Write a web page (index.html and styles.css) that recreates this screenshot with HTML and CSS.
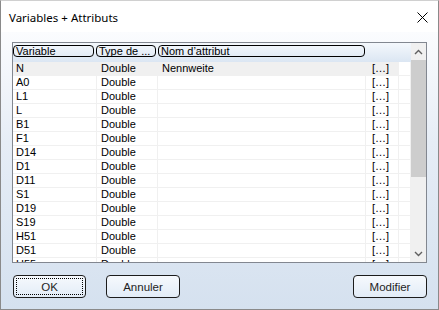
FILE: index.html
```html
<html>
	<head>
		<title>Variables + Attributs</title>
		<link rel="stylesheet" href="styles.css">
	</head>
	<body>
		<div class="dialog">
			<div class="titlebar">
				<span class="title">Variables + Attributs</span>
				<svg class="close" width="11" height="11" viewBox="0 0 11 11">
					<path d="M0.5 0.5 L10.5 10.5 M10.5 0.5 L0.5 10.5" stroke="#000" stroke-width="1" fill="none"/>
				</svg>
			</div>
			<div class="client">
				<div class="listbox">
					<div class="grid">
						<div class="header">
							<div class="hcell w1">Variable</div>
							<div class="hcell w2">Type de ...</div>
							<div class="hcell w3">Nom d’attribut</div>
						</div>
						<div class="rows" id="rows"></div>
					</div>
					<div class="scrollbar">
						<div class="sbtn">
							<svg width="9" height="6" viewBox="0 0 9 6"><path d="M1 5 L4.5 1.5 L8 5" stroke="#606060" stroke-width="1.4" fill="none"/></svg>
						</div>
						<div class="thumb"></div>
						<div class="track"></div>
						<div class="sbtn">
							<svg width="9" height="6" viewBox="0 0 9 6"><path d="M1 1 L4.5 4.5 L8 1" stroke="#606060" stroke-width="1.4" fill="none"/></svg>
						</div>
					</div>
				</div>
				<div class="buttons">
					<div class="btn focus"><span>OK</span></div>
					<div class="btn">Annuler</div>
					<div class="spacer"></div>
					<div class="btn">Modifier</div>
				</div>
			</div>
		</div>

		<script>
			var variables=["N","A0","L1","L","B1","F1","D14","D1","D11","S1","D19","S19","H51","D51","H55"];
			init();
			function init(){
				var rows=document.getElementById("rows");
				for(var x=0; x<variables.length; x++){
					var row=document.createElement('div');
					row.className="row";
					if(x==0){ row.className+=" first"; }
					row.innerHTML='<div class="cell">'+variables[x]+'</div>'+
						'<div class="cell">Double</div>'+
						'<div class="cell">'+(x==0 ? 'Nennweite' : '')+'</div>'+
						'<div class="cell dots">[…]</div>'+
						'<div class="cell blank"></div>';
					rows.appendChild(row);
				}
			}
		</script>
	</body>
</html>
```

FILE: styles.css
```css
body{
	margin:0px;
	background-color:white;
}
.dialog{
	width:439px;
	height:310px;
	box-sizing:border-box;
	border:1px solid #8a8a8a;
	border-top-color:#d0d0d0;
	display:flex;
	flex-direction:column;
	font-family:"Liberation Sans", Arial, sans-serif;
}
.titlebar{
	height:31px;
	background:white;
	display:flex;
	align-items:center;
	padding-left:8px;
	padding-right:10px;
	flex-shrink:0;
}
.title{
	font-family:"Noto Sans", sans-serif;
	font-size:11.5px;
	color:black;
	flex:1;
	margin-top:1px;
}
.close{
	display:block;
	margin-top:1px;
}
.client{
	flex:1;
	background:linear-gradient(to bottom, #fbfcfe 0%, #e6edf6 40%, #d5e1ef 100%);
	padding:10px 11px 0px 11px;
	display:flex;
	flex-direction:column;
}
.listbox{
	height:221px;
	box-sizing:border-box;
	border:1px solid #828790;
	background:white;
	display:flex;
	overflow:hidden;
}
.grid{
	width:398px;
	overflow:hidden;
	font-size:11px;
	color:black;
}
.header{
	height:19px;
	box-sizing:border-box;
	background:linear-gradient(to bottom, #f4f8fc, #dbe6f3);
	display:flex;
	gap:2px;
	padding-top:2px;
}
.hcell{
	height:12px;
	box-sizing:border-box;
	border:1px solid #000;
	border-radius:4px;
	line-height:10px;
	padding-left:2px;
	white-space:nowrap;
	overflow:hidden;
}
.w1{ width:81px; }
.w2{ width:60px; }
.w3{ width:207px; }
.row{
	display:grid;
	grid-template-columns:84px 61px 208px 33px 12px;
	height:14px;
}
.row.first .cell{
	background:#f0f0f0;
}
.row.first .cell.blank{
	background:white;
}
.cell{
	box-sizing:border-box;
	border-right:1px solid #f0f0f0;
	border-bottom:1px solid #f0f0f0;
	line-height:13px;
	padding-left:3px;
	white-space:nowrap;
	overflow:hidden;
}
.cell:nth-child(2),.cell:nth-child(3){
	padding-left:4px;
}
.cell.dots{
	padding-left:6px;
}
.scrollbar{
	width:15px;
	background:#f0f0f0;
	display:flex;
	flex-direction:column;
}
.sbtn{
	height:17px;
	display:flex;
	align-items:center;
	justify-content:center;
	flex-shrink:0;
}
.thumb{
	height:117px;
	background:#cdcdcd;
}
.track{
	flex:1;
}
.buttons{
	display:flex;
	gap:20px;
	margin-top:12px;
	padding-left:1px;
}
.spacer{
	flex:1;
}
.btn{
	width:74px;
	height:23px;
	box-sizing:border-box;
	border:1px solid #1c1c1c;
	border-radius:4px;
	background:linear-gradient(to bottom, #f6f9fd, #e2ecf7);
	font-size:11.5px;
	color:#1e1e1e;
	display:flex;
	align-items:center;
	justify-content:center;
}
.btn.focus{
	width:73px;
	padding:2px;
}
.btn.focus span{
	flex:1;
	align-self:stretch;
	border:1px dotted #000;
	display:flex;
	align-items:center;
	justify-content:center;
}
```
